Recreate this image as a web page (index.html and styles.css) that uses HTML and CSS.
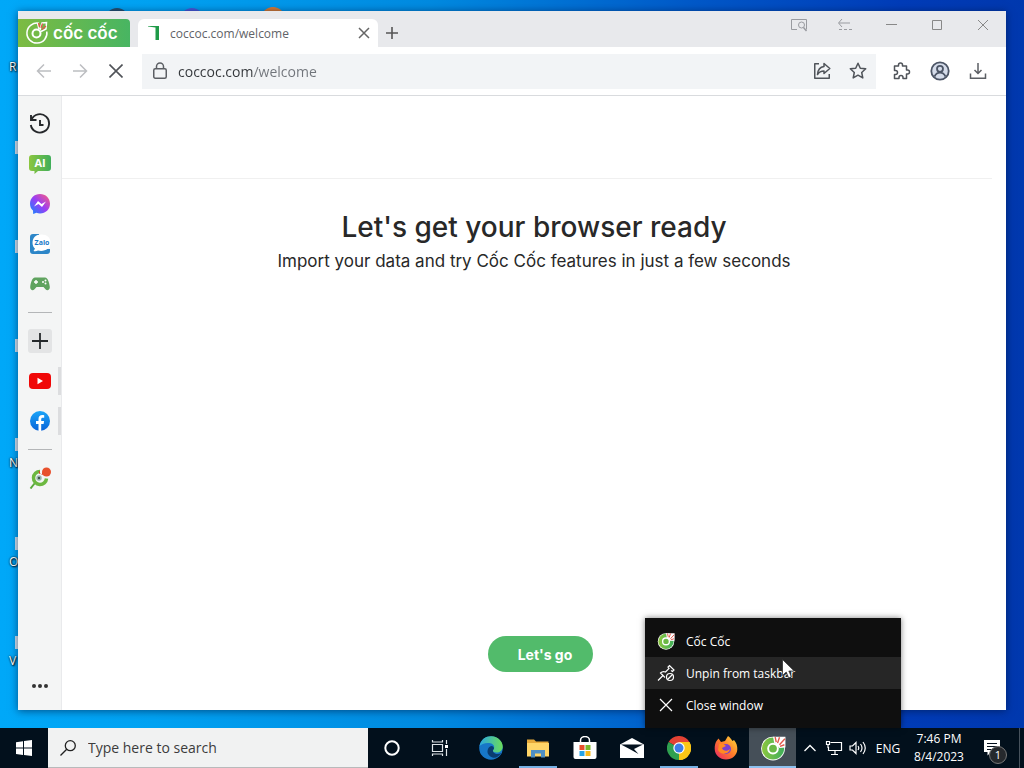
FILE: index.html
```html
<!DOCTYPE html>
<html lang="en">
<head>
<meta charset="utf-8">
<title>coccoc.com/welcome</title>
<link rel="stylesheet" href="styles.css">
</head>
<body>
<svg class="defs" aria-hidden="true">
  <defs>
    <linearGradient id="gGreen" x1="0" x2="1"><stop offset="0" stop-color="#8cc63f"/><stop offset="1" stop-color="#3fae5a"/></linearGradient>
    <linearGradient id="gMsg" x1="0" y1="1" x2="1" y2="0"><stop offset="0" stop-color="#0a8cff"/><stop offset=".5" stop-color="#9a3df5"/><stop offset="1" stop-color="#ff5f78"/></linearGradient>
    <linearGradient id="gFb" x1="0" y1="0" x2="0" y2="1"><stop offset="0" stop-color="#1aa5f8"/><stop offset="1" stop-color="#0a63d8"/></linearGradient>
    <linearGradient id="gEdge" x1="0" y1="0" x2="1" y2="0"><stop offset="0" stop-color="#2aa8e0"/><stop offset="1" stop-color="#6bdc5a"/></linearGradient>
    <linearGradient id="gFox" x1="1" y1="0" x2="0" y2="1"><stop offset="0" stop-color="#ffdf3a"/><stop offset=".5" stop-color="#ff7a2a"/><stop offset="1" stop-color="#e8206a"/></linearGradient>
    <symbol id="coc" viewBox="0 0 24 24">
      <circle cx="12" cy="12.500" r="11" fill="#fff"/>
      <circle cx="12" cy="12.500" r="10.200" fill="url(#gGreen)"/>
      <circle cx="12" cy="12.500" r="4.500" fill="#6ab845" stroke="#fff" stroke-width="1.800"/>
      <path d="M12 1.500h11.500v10l-5.500.500-5-5z" fill="#fff"/>
      <path d="M14 2l1 4.500M18 2l-1.800 5.500M23 3.500l-5 5.500M22.500 9l-4 1.500" stroke="#e2574a" stroke-width="1.300"/>
    </symbol>
  </defs>
</svg>

<main class="desktop">
  <span class="shortcut shortcut-1">R</span>
  <span class="shortcut shortcut-2">N</span>
  <span class="shortcut shortcut-3">O</span>
  <span class="shortcut shortcut-4">V</span>
  <i class="edge edge-1"></i><i class="edge edge-2"></i><i class="edge edge-3"></i><i class="edge edge-4"></i><i class="edge edge-5"></i><i class="edge edge-6"></i>
  <i class="dot dot-1"></i><i class="dot dot-2"></i><i class="dot dot-3"></i>

  <section class="window">
    <header class="tabstrip">
      <button class="brand">
        <svg width="24" height="24" viewBox="0 0 24 24" fill="none" stroke="#fff" stroke-width="1.500"><path d="M14 2.300A10 10 0 1 0 21.800 10.500"/><circle cx="11.500" cy="12.500" r="4" stroke-width="2"/><path d="M14 8l-1.500-6M15 9l2-7 4.500-.5-.5 6.500-5 2.500"/><path d="M14.500 6l-1-4M16 7l1.500-4.500M17 8.500L21 5" stroke="#e2574a" stroke-width="1.300"/></svg>
        <span>cốc cốc</span>
      </button>
      <div class="tab">
        <svg width="16" height="16" viewBox="0 0 16 16"><path d="M2 1h11v14H9.500V2.500L2 1.500z" fill="#1f9a48"/></svg>
        <span class="tab-title">coccoc.com/welcome</span>
        <button class="plain" aria-label="Close tab"><svg width="12" height="12" viewBox="0 0 12 12" stroke="#666" stroke-width="1.500"><path d="M1 1l10 10M11 1L1 11"/></svg></button>
      </div>
      <button class="plain new-tab" aria-label="New tab"><svg width="12" height="12" viewBox="0 0 12 12" stroke="#555" stroke-width="1.600"><path d="M6 0v12M0 6h12"/></svg></button>
      <div class="caption">
        <button class="plain" aria-label="Search tabs"><svg width="18" height="14" viewBox="0 0 18 14" fill="none" stroke="#999ba0"><path d="M7 11.500H1.500v-10h15v10"/><circle cx="11.500" cy="7" r="3"/><path d="M13.500 9.500l3 3.500" stroke-width="1.500"/></svg></button>
        <button class="plain" aria-label="Restore tab"><svg width="16" height="14" viewBox="0 0 16 14" fill="none" stroke="#999ba0"><path d="M5 1L1.500 5 5 9M2 5h11"/><path d="M2 11.500h14" stroke-dasharray="3 2"/></svg></button>
        <button class="plain" aria-label="Minimize"><svg width="12" height="12" viewBox="0 0 12 12" stroke="#888"><path d="M1 5.500h11"/></svg></button>
        <button class="plain" aria-label="Maximize"><svg width="12" height="12" viewBox="0 0 12 12" fill="none" stroke="#888"><path d="M1.500 1.500h9v9h-9z"/></svg></button>
        <button class="plain" aria-label="Close"><svg width="12" height="12" viewBox="0 0 12 12" stroke="#888"><path d="M1 1l10 10M11 1L1 11"/></svg></button>
      </div>
    </header>

    <nav class="toolbar">
      <button class="plain nav" aria-label="Back"><svg width="16" height="16" viewBox="0 0 16 16" fill="none" stroke="#bcbec1" stroke-width="1.500"><path d="M15 8H2M8 1.500L1.500 8 8 14.500"/></svg></button>
      <button class="plain nav" aria-label="Forward"><svg width="16" height="16" viewBox="0 0 16 16" fill="none" stroke="#bcbec1" stroke-width="1.500"><path d="M1 8h13M8 1.500L14.500 8 8 14.500"/></svg></button>
      <button class="plain nav" aria-label="Stop"><svg width="14" height="14" viewBox="0 0 14 14" stroke="#505358" stroke-width="1.600"><path d="M.5.5l13 13M13.500.5l-13 13"/></svg></button>
      <div class="address">
        <svg width="16" height="18" viewBox="0 0 16 18" fill="none" stroke="#5c5f64" stroke-width="1.500"><rect x="1.750" y="6.750" width="12.500" height="9.500" rx="1.500"/><path d="M4.500 6.500V4.500a3.500 3.500 0 0 1 7 0v2"/></svg>
        <input class="url" type="text" aria-label="Address" value="coccoc.com/welcome">
        <button class="plain nav" aria-label="Share"><svg width="18" height="18" viewBox="0 0 18 18" fill="none" stroke="#50545a" stroke-width="1.500" stroke-linejoin="round"><path d="M6 1.750H1.750v14.500h14.500V12"/><path d="M11 1.500L16.800 6.500 11 11.500V9C8 9 6 10 4.500 12.500 4.800 8.500 6.500 5 11 4.500z"/></svg></button>
        <button class="plain nav" aria-label="Bookmark"><svg width="18" height="18" viewBox="0 0 18 18" fill="none" stroke="#50545a" stroke-width="1.500" stroke-linejoin="round"><path d="M9 1.200l2.300 5 5.400.600-4 3.700 1.100 5.400L9 13.200l-4.800 2.700 1.100-5.400-4-3.700 5.400-.600z"/></svg></button>
      </div>
      <button class="plain ext" aria-label="Extensions"><svg width="18" height="18" viewBox="0 0 18 18" fill="none" stroke="#50545a" stroke-width="1.500" stroke-linejoin="round"><path d="M1.500 4H5.500V3a2 2 0 0 1 4 0v1h4v4h1a2 2 0 0 1 0 4h-1v4.500H10V15.500a2 2 0 0 0-4 0v1H1.500V12.500h1a2 2 0 0 0 0-4h-1z"/></svg></button>
      <button class="plain ext" aria-label="Profile"><svg width="20" height="20" viewBox="0 0 20 20" fill="none" stroke="#4c5566" stroke-width="1.800"><circle cx="10" cy="10" r="8.700" fill="#d5dcea"/><circle cx="10" cy="7.800" r="3"/><path d="M4.500 15.500c1.500-3 3.300-3.800 5.500-3.800s4 .8 5.500 3.800"/></svg></button>
      <button class="plain ext" aria-label="Downloads"><svg width="18" height="18" viewBox="0 0 18 18" fill="none" stroke="#5c5f64" stroke-width="1.500"><path d="M9 1v10M5.500 8L9 11.500 12.500 8M1.500 11.500v4.750h15V11.500"/></svg></button>
    </nav>

    <div class="body">
      <aside class="sidebar">
        <button class="plain item" aria-label="History"><svg width="22" height="22" viewBox="0 0 22 22" fill="none" stroke="#25282b" stroke-width="1.900"><path d="M2.500 6.500A9.200 9.200 0 1 1 1.800 12M2 2v5h5.500"/><path d="M11 7v5h3.500"/></svg></button>
        <button class="plain item" aria-label="AI chat"><svg width="22" height="20" viewBox="0 0 22 20"><path d="M3 1h16a3 3 0 0 1 3 3v10a3 3 0 0 1-3 3H9l-3.500 3V17H3a3 3 0 0 1-3-3V4a3 3 0 0 1 3-3z" fill="url(#gGreen)"/><text class="ai" x="11" y="13" text-anchor="middle">AI</text></svg></button>
        <button class="plain item" aria-label="Messenger"><svg width="20" height="20" viewBox="0 0 20 20"><path d="M10 0C4.300 0 0 4.100 0 9.700c0 3 1.200 5.300 3 6.900L3.200 20l3.200-1.200c1 .4 2.300.6 3.600.6 5.700 0 10-4.100 10-9.700S15.700 0 10 0z" fill="url(#gMsg)"/><path d="M4 12.500l4-5.500 3.500 3L16 7.500 12 13l-3.500-3z" fill="#fff"/></svg></button>
        <button class="plain item" aria-label="Zalo"><svg width="22" height="20" viewBox="0 0 22 20"><path d="M4 0h6v20H4a3 3 0 0 1-3-3V3a3 3 0 0 1 3-3zM5 15h16v2a3 3 0 0 1-3 3H5z" fill="#2c86c8"/><path d="M12.500.500C6.500.500 3.500 4 3.500 8.800c0 2.500 1 4.500 2.500 6L4.500 17c2 .5 3.500 0 4.500-.5 6 1.500 12.500-1.500 12.500-8C21.500 3.500 18 .5 12.500.5z" fill="#fff"/><text class="zalo" x="13" y="11" text-anchor="middle">Zalo</text></svg></button>
        <button class="plain item" aria-label="Games"><svg width="20" height="14" viewBox="0 0 20 14"><path d="M5 .5h10c3 0 4.500 6 4.800 9.500.2 3-2.600 4.200-4.300 2.200L13.500 10h-7l-2 2.200C2.800 14.200 0 13 .2 10 .5 6.500 2 .5 5 .5z" fill="#5fa35f"/><path d="M6 3v4M4 5h4" stroke="#fff" stroke-width="1.400"/><circle cx="13" cy="5" r="1" fill="#fff"/><circle cx="15.500" cy="3.500" r="1" fill="#fff"/><circle cx="15.500" cy="6.500" r="1" fill="#fff"/></svg></button>
        <hr class="rule">
        <button class="plain item" aria-label="Add"><span class="add"><svg width="16" height="16" viewBox="0 0 16 16" stroke="#25282b" stroke-width="1.800"><path d="M8 0v16M0 8h16"/></svg></span></button>
        <button class="plain item pinned" aria-label="YouTube"><svg width="22" height="16" viewBox="0 0 22 16"><rect width="22" height="16" rx="4" fill="#f00707"/><path d="M8.500 4.800v6.400L14 8z" fill="#fff"/></svg></button>
        <button class="plain item pinned" aria-label="Facebook"><svg width="20" height="20" viewBox="0 0 20 20"><circle cx="10" cy="10" r="10" fill="url(#gFb)"/><path d="M8.500 20v-7H6v-3h2.500V8c0-2.700 1.500-4 3.800-4 .9 0 1.700.1 1.900.2v2.500h-1.400c-1.200 0-1.600.6-1.600 1.600V10h2.900l-.5 3h-2.400v7z" fill="#fff"/></svg></button>
        <hr class="rule">
        <button class="plain item" aria-label="Points"><svg width="22" height="22" viewBox="0 0 22 22" fill="none"><path d="M11 4.500a6.500 6.500 0 1 0 6.500 7" stroke="#6cb840" stroke-width="3.500"/><path d="M1.500 21.500l4-5" stroke="#5aa83c" stroke-width="2"/><circle cx="10" cy="11" r="2" fill="#41584a" stroke="#9db8b0" stroke-width="1.500"/><path d="M11 7l-1-3M13 8l1-3" stroke="#d8402c"/><circle cx="17.500" cy="5" r="4.500" fill="#e8502c"/></svg></button>
        <button class="plain item more" aria-label="More"><svg width="18" height="4" viewBox="0 0 18 4" fill="#333"><circle cx="3" cy="2" r="2"/><circle cx="9" cy="2" r="2"/><circle cx="15" cy="2" r="2"/></svg></button>
      </aside>
      <article class="page">
        <div class="page-top"></div>
        <h1>Let's get your browser ready</h1>
        <p>Import your data and try Cốc Cốc features in just a few seconds</p>
        <button class="go">Let's go</button>
      </article>
    </div>
  </section>

  <div class="menu" role="menu">
    <button class="menu-item" role="menuitem"><svg width="18" height="18"><use href="#coc"/></svg><span>Cốc Cốc</span></button>
    <button class="menu-item hover" role="menuitem"><svg width="18" height="18" viewBox="0 0 18 18" fill="none" stroke="#fff" stroke-width="1.200"><path d="M1 16.500L6 11.500M8 13.500L3.500 9c1.500-1.500 3.500-1.500 5-1L12 4.500 11 3l1.500-1.500L17 6l-1.500 1.500L14 6.500"/><circle cx="13" cy="13" r="3.500"/><path d="M10.500 15.500l5-5"/></svg><span>Unpin from taskbar</span></button>
    <button class="menu-item" role="menuitem"><svg width="18" height="18" viewBox="0 0 18 18" stroke="#fff" stroke-width="1.200"><path d="M3 3l12 12M15 3L3 15"/></svg><span>Close window</span></button>
  </div>
  <svg class="cursor" width="13" height="20" viewBox="0 0 13 20"><path d="M.5.500v16l3.700-3.500 2.500 5.800 2.600-1.100L6.800 12h5.400z" fill="#fff" stroke="#222" stroke-width=".7"/></svg>
</main>

<footer class="taskbar">
  <button class="plain start" aria-label="Start"><svg width="16" height="16" viewBox="0 0 16 16" fill="#fff"><path d="M0 2.200L7 1.200v6.400H0zM8 1.100L16 0v7.600H8zM0 8.500h7v6.400l-7-1zM8 8.500h8V16l-8-1.100z"/></svg></button>
  <label class="search"><svg width="16" height="16" viewBox="0 0 16 16" fill="none" stroke="#222" stroke-width="1.300"><circle cx="10.300" cy="5.700" r="5"/><path d="M6.700 9.300L.5 15.500"/></svg><input type="search" placeholder="Type here to search" aria-label="Search"></label>
  <button class="plain sys" aria-label="Cortana"><svg width="18" height="18" viewBox="0 0 18 18" fill="none" stroke="#fff" stroke-width="2"><circle cx="9" cy="9" r="6.700"/></svg></button>
  <button class="plain sys" aria-label="Task view"><svg width="18" height="16" viewBox="0 0 18 16" fill="none" stroke="#dfe4e8" stroke-width="1.200"><path d="M1.500 4.500h10v7h-10zM1.500 0v2h10V0M1.500 16v-2h10v2M15.500 0v4M15.500 9v7"/><path d="M14 5h3v3h-3z" fill="#fff" stroke="none"/></svg></button>
  <div class="apps">
    <button class="plain app" aria-label="Edge"><svg width="24" height="24" viewBox="0 0 24 24"><circle cx="12" cy="12" r="11.800" fill="#1777c8"/><path d="M.5 10C2 3 7 0 12.500.2 19 .5 24 5.500 23.700 11c-.2 3.500-3 5.500-6 5.500-2.500 0-4-1-4-2 0-.8 1.500-1.300 1.500-3.500C15 8.500 12.500 7 9 7 5 7 2 8.500.5 10z" fill="url(#gEdge)"/><path d="M8.500 15c.3-3 2-4.500 4-5 1.700.3 2.700 1.300 2.500 2.500-.2 1-1.500 1.500-1 3 .8 2.500 5 3.500 8.500 1.500-3 4-6 5.500-9 4.500S8.200 18 8.500 15z" fill="#0a3c70"/></svg></button>
    <button class="plain app running" aria-label="File Explorer"><svg width="22" height="20" viewBox="0 0 22 20"><path d="M0 1.500h7l2 2h12.500V18H0z" fill="#e6a93a"/><path d="M0 5h22v13.500H0z" fill="#ffd568"/><path d="M4 19.500v-7.500h14v7.500h-4v-4H8v4z" fill="#4f8fc4"/></svg></button>
    <button class="plain app" aria-label="Store"><svg width="24" height="24" viewBox="0 0 24 24"><path d="M7.500 7V4.500a4.500 4 0 0 1 9 0V7" fill="none" stroke="#fff" stroke-width="1.500"/><path d="M.5 6h23v15a2 2 0 0 1-2 2h-19a2 2 0 0 1-2-2z" fill="#fff"/><path d="M6.500 9h5v5h-5z" fill="#e8502c"/><path d="M12.500 9h5v5h-5z" fill="#7cb92c"/><path d="M6.500 15h5v5h-5z" fill="#26a2e6"/><path d="M12.500 15h5v5h-5z" fill="#f8b81c"/></svg></button>
    <button class="plain app" aria-label="Mail"><svg width="24" height="20" viewBox="0 0 24 20"><path d="M12 0l12 6.500V20H0V6.500z" fill="#fff"/><path d="M1 6.500h22L14 11l4.500 5L9.500 11z" fill="#04121f"/></svg></button>
    <button class="plain app running" aria-label="Chrome"><svg width="24" height="24" viewBox="0 0 24 24"><path d="M12 12L1.600 6A12 12 0 0 1 22.400 6z" fill="#e34234"/><path d="M12 12l10.400-6A12 12 0 0 1 12 24z" fill="#fbc616"/><path d="M12 12v12A12 12 0 0 1 1.600 6z" fill="#2fa050"/><path d="M12 6h10.400A12 12 0 0 1 12 24l5-9z" fill="#fbc616"/><circle cx="12" cy="12" r="5.700" fill="#fff"/><circle cx="12" cy="12" r="4.500" fill="#3d7de8"/></svg></button>
    <button class="plain app" aria-label="Firefox"><svg width="24" height="24" viewBox="0 0 24 24"><path d="M2.500 5l2-2.500L7 6l4-1 3-5c2 1 3 3 4.500 5l1.500-1c2.500 3 3.500 6 3.300 9.500C23 19.500 18 23.500 12 23.500S.8 19 .7 13C.6 9.500 1.300 7 2.500 5z" fill="url(#gFox)"/><circle cx="12" cy="13" r="5" fill="#7a3fd0"/><path d="M5 8c3-1 5 0 7 2l-4 2c1 3 5 4 8 1-1 5-9 7-12 1z" fill="#ff8a22"/></svg></button>
    <button class="plain app active" aria-label="Cốc Cốc"><svg width="26" height="26"><use href="#coc"/></svg></button>
  </div>
  <div class="tray">
    <button class="plain tray-item" aria-label="Show hidden icons"><svg width="12" height="8" viewBox="0 0 12 8" fill="none" stroke="#fff" stroke-width="1.300"><path d="M.5 7L6 1.500 11.500 7"/></svg></button>
    <button class="plain tray-item" aria-label="Network"><svg width="18" height="16" viewBox="0 0 18 16" fill="none" stroke="#fff" stroke-width="1.200"><path d="M5.500 2.500h11v8h-13V7M10 10.500v4M6 14.500h7M1.500 1.500h3v3h-3zM3 5v3"/></svg></button>
    <button class="plain tray-item" aria-label="Volume"><svg width="18" height="14" viewBox="0 0 18 14" fill="none" stroke="#fff" stroke-width="1.200"><path d="M1 5h2.500L7 1.500v11L3.500 9H1zM9 5q1.500 2 0 4M11.500 3q3 4 0 8M14 1q4.500 6 0 12"/></svg></button>
    <button class="plain lang">ENG</button>
    <button class="plain clock"><span>7:46 PM</span><span>8/4/2023</span></button>
    <button class="plain notice" aria-label="Notifications"><svg width="18" height="18" viewBox="0 0 18 18"><path d="M1 1h16v12H8l-3.500 3.500V13H1z" fill="#fff"/><path d="M4 4.500h10M4 7.500h10M4 10.500h6" stroke="#04101d" stroke-width="1.200"/></svg><span class="badge">1</span></button>
  </div>
</footer>
</body>
</html>
```
FILE: styles.css
```css
* { box-sizing: border-box; }
body {
  margin: 0;
  height: 100vh;
  display: flex;
  flex-direction: column;
  overflow: hidden;
  font-family: "Open Sans", "Noto Sans", sans-serif;
  font-size: 12px;
}
.defs { position: absolute; width: 0; height: 0; }
button, input { font: inherit; color: inherit; }
svg { flex: none; display: block; }
.plain {
  border: 0;
  padding: 0;
  background: none;
  display: flex;
  align-items: center;
  justify-content: center;
}

/* Desktop */
.desktop {
  flex: 1;
  position: relative;
  background: linear-gradient(90deg, #00a8f8 0%, #00a2f2 15%, #008ae0 42%, #0058c8 68%, #003cb8 88%, #0038ae 100%);
}
.shortcut {
  position: absolute;
  left: 9px;
  color: #fff;
  text-shadow: 0 0 2px #000, 1px 1px 2px #000;
}
.shortcut-1 { top: 58px; }
.shortcut-2 { top: 454px; }
.shortcut-3 { top: 553px; }
.shortcut-4 { top: 652px; }
.edge { position: absolute; left: 15px; width: 4px; height: 13px; background: #d5e4ee; }
.edge-1 { top: 141px; }
.edge-2 { top: 240px; }
.edge-3 { top: 339px; }
.edge-4 { top: 438px; }
.edge-5 { top: 537px; }
.edge-6 { top: 636px; }
.dot { position: absolute; top: 7px; width: 24px; height: 24px; border-radius: 50%; }
.dot-1 { left: 105px; top: 8px; background: #25506e; }
.dot-2 { left: 180px; top: 8px; background: #4a58d8; }
.dot-3 { left: 261px; background: #d87a30; }

/* Browser window */
.window {
  position: absolute;
  inset: 11px 18px 18px;
  display: flex;
  flex-direction: column;
  background: #fff;
  box-shadow: 0 1px 8px rgba(0, 20, 60, .6);
}
.tabstrip {
  display: flex;
  align-items: flex-end;
  height: 36px;
  background: #e8e9ec;
}
.brand {
  display: flex;
  align-items: center;
  gap: 4px;
  width: 112px;
  height: 28px;
  margin-right: 8px;
  padding: 0 0 0 7px;
  border: 0;
  border-radius: 0 4px 0 0;
  background: linear-gradient(90deg, #7dbb42, #48b562);
  color: #fff;
  font-family: Inter, sans-serif;
  font-size: 17px;
  font-weight: 600;
  line-height: 24px;
  white-space: nowrap;
}
.tab {
  display: flex;
  align-items: center;
  gap: 8px;
  width: 240px;
  height: 28px;
  padding: 0 8px;
  border-radius: 6px 6px 0 0;
  background: #fff;
  color: #5f6368;
}
.tab-title { flex: 1; }
.new-tab { width: 28px; height: 28px; }
.caption { display: flex; align-self: flex-start; margin-left: auto; }
.caption .plain { width: 46px; height: 28px; }
.toolbar {
  display: flex;
  align-items: center;
  height: 49px;
  padding: 0 9px 0 8px;
  border-bottom: 1px solid #d9dbde;
}
.nav { width: 36px; height: 34px; }
.address {
  flex: 1;
  display: flex;
  align-items: center;
  height: 35px;
  margin: 0 7px 0 8px;
  padding-left: 10px;
  background: #f2f4f6;
}
.url {
  flex: 1;
  min-width: 0;
  padding: 0 0 0 10px;
  border: 0;
  color: transparent;
  background: linear-gradient(90deg, #33363a 86px, #70747a 86px) text;
  font-size: 14px;
}
.ext { width: 38px; height: 34px; }
.body { flex: 1; display: flex; min-height: 0; }

.sidebar {
  display: flex;
  flex-direction: column;
  align-items: center;
  width: 44px;
  padding: 8px 0 4px;
  border-right: 1px solid #e9eaec;
  background: #f4f5f5;
}
.item { width: 100%; height: 40px; flex: none; }
.pinned {
  background: linear-gradient(#dcdddf, #dcdddf) right / 3px 28px no-repeat;
}
.rule {
  flex: none;
  width: 24px;
  height: 1px;
  margin: 8px 0;
  border: 0;
  background: #b4b6b8;
}
.add { display: grid; place-items: center; width: 24px; height: 24px; border-radius: 3px; background: #e3e4e5; }
.more { margin-top: auto; }
.ai { fill: #fff; font-size: 11px; font-weight: 700; }
.zalo { fill: #1b78c8; font-size: 7px; font-weight: 700; }

.page {
  flex: 1;
  display: flex;
  flex-direction: column;
  align-items: center;
  padding-bottom: 38px;
  color: #282828;
  font-family: Inter, sans-serif;
}
.page-top {
  align-self: stretch;
  height: 83px;
  margin-right: 14px;
  border-bottom: 1px solid #f0f0f0;
}
.page h1 { margin: 28px 0 0; font-size: 28px; font-weight: 500; line-height: 40px; }
.page p { margin: 2px 0 0; font-size: 17px; line-height: 24px; }
.go {
  width: 105px;
  height: 36px;
  margin: auto 0 0 12px;
  padding: 0 0 0 10px;
  border: 0;
  border-radius: 18px;
  background: #52bb6b;
  color: #fff;
  font-size: 14px;
  font-weight: 700;
}

/* Jump list */
.menu {
  position: absolute;
  left: 645px;
  bottom: 0;
  width: 256px;
  padding: 7px 0;
  background: #0f0f0f;
  box-shadow: 0 0 6px rgba(0, 0, 0, .5);
}
.menu-item {
  display: flex;
  align-items: center;
  gap: 11px;
  width: 100%;
  height: 32px;
  padding: 0 12px;
  border: 0;
  background: none;
  color: #fff;
}
.hover { background: #262626; }
.cursor { position: absolute; left: 782px; top: 659px; }

/* Taskbar */
.taskbar { display: flex; height: 40px; background: #02101c; color: #fff; }
.start, .sys { width: 48px; }
.search {
  display: flex;
  align-items: center;
  gap: 12px;
  width: 320px;
  padding: 0 12px;
  border-bottom: 1px solid #b8babb;
  background: #f1f2f2;
}
.search input { flex: 1; min-width: 0; padding: 0; border: 0; background: none; font-size: 14px; }
.search input::placeholder { color: #3c3c3c; opacity: 1; }
.apps { display: flex; margin-left: 3px; }
.app { width: 47px; border-bottom: 2px solid transparent; padding-top: 2px; }
.running { background: linear-gradient(#76b0e4, #76b0e4) bottom / 38px 2px no-repeat border-box; }
.active { background: #454f58; border-bottom-color: #8cc0ee; }
.tray { display: flex; margin-left: auto; padding-right: 4px; }
.tray-item { width: 24px; }
.lang { width: 36px; }
.clock { width: 66px; flex-direction: column; line-height: 18px; }
.notice { position: relative; width: 48px; padding-right: 8px; border-right: 1px solid #47525c; }
.badge {
  position: absolute;
  right: 12px;
  bottom: 4px;
  width: 18px;
  height: 18px;
  border: 1px solid #777;
  border-radius: 50%;
  background: #26292d;
  font-size: 11px;
  line-height: 16px;
}
```
